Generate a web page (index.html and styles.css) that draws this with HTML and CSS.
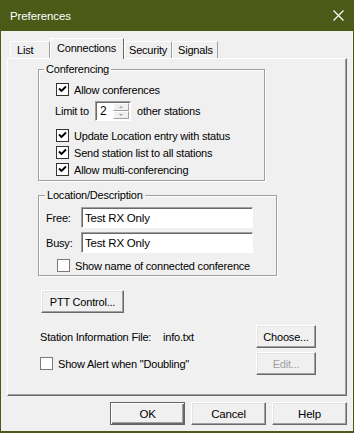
FILE: index.html
```html
<!DOCTYPE html>
<html lang="en">
<head>
    <meta charset="UTF-8">
    <title>Preferences</title>
    <link rel="stylesheet" href="styles.css">
</head>
<body>

<div class="window">
    <div class="titlebar">
        <span class="title">Preferences</span>
        <svg class="close" width="11" height="11" viewBox="0 0 11 11">
            <path d="M0.5 0.5 L10.5 10.5 M10.5 0.5 L0.5 10.5" stroke="#fff" stroke-width="1.2" fill="none"/>
        </svg>
    </div>

    <div class="client">
        <div class="tabs">
            <div class="tab tab-list">List</div>
            <div class="tab active">Connections</div>
            <div class="tab tab-security">Security</div>
            <div class="tab tab-signals">Signals</div>
        </div>

        <div class="panel">
            <fieldset class="group conf">
                <legend>Conferencing</legend>
                <div class="check-row">
                    <span class="checkbox checked"><svg viewBox="0 0 11 11"><path d="M2 4.5 L4.5 7 L9 2.5" /></svg></span>
                    <span>Allow conferences</span>
                </div>
                <div class="limit-row">
                    <span class="limit-label">Limit to</span>
                    <div class="spin">
                        <span class="spin-value">2</span>
                        <div class="spin-btns">
                            <span class="spin-up"></span>
                            <span class="spin-down"></span>
                        </div>
                    </div>
                    <span class="limit-after">other stations</span>
                </div>
                <div class="check-row first-after">
                    <span class="checkbox checked"><svg viewBox="0 0 11 11"><path d="M2 4.5 L4.5 7 L9 2.5" /></svg></span>
                    <span>Update Location entry with status</span>
                </div>
                <div class="check-row">
                    <span class="checkbox checked"><svg viewBox="0 0 11 11"><path d="M2 4.5 L4.5 7 L9 2.5" /></svg></span>
                    <span>Send station list to all stations</span>
                </div>
                <div class="check-row">
                    <span class="checkbox checked"><svg viewBox="0 0 11 11"><path d="M2 4.5 L4.5 7 L9 2.5" /></svg></span>
                    <span>Allow multi-conferencing</span>
                </div>
            </fieldset>

            <fieldset class="group loc">
                <legend>Location/Description</legend>
                <div class="field-row">
                    <span class="field-label">Free:</span>
                    <div class="textbox">Test RX Only</div>
                </div>
                <div class="field-row">
                    <span class="field-label">Busy:</span>
                    <div class="textbox">Test RX Only</div>
                </div>
                <div class="check-row show-name">
                    <span class="checkbox"></span>
                    <span>Show name of connected conference</span>
                </div>
            </fieldset>

            <button class="btn ptt">PTT Control...</button>

            <div class="file-row">
                <span class="file-label">Station Information File:</span>
                <span class="file-name">info.txt</span>
                <button class="btn side-btn">Choose...</button>
            </div>

            <div class="alert-row">
                <span class="checkbox"></span>
                <span class="alert-text">Show Alert when "Doubling"</span>
                <button class="btn side-btn" disabled>Edit...</button>
            </div>
        </div>

        <div class="footer">
            <button class="btn foot-btn default">OK</button>
            <button class="btn foot-btn">Cancel</button>
            <button class="btn foot-btn">Help</button>
        </div>
    </div>
</div>

</body>
</html>
```

FILE: styles.css
```css
* {
    box-sizing: border-box;
    margin: 0;
    padding: 0;
}

body {
    background: #fff;
    font-family: "Liberation Sans", Arial, sans-serif;
    font-size: 11px;
    letter-spacing: -0.2px;
    color: #000;
}

.window {
    width: 354px;
    height: 433px;
    border: 1px solid #4b5a17;
    border-bottom-width: 2px;
    background: #f0f0f0;
    display: flex;
    flex-direction: column;
}

.titlebar {
    height: 31px;
    background: #4b5a17;
    display: flex;
    align-items: center;
    justify-content: space-between;
    padding: 0 10px 0 10px;
    margin: -1px -1px 0 -1px;
}

.title {
    color: #fff;
    font-size: 11.5px;
    letter-spacing: -0.1px;
}

.close {
    display: block;
}

.client {
    padding: 7px 6px 0 6px;
    display: flex;
    flex-direction: column;
}

/* tabs */

.tabs {
    display: flex;
    align-items: flex-end;
    height: 20px;
    padding-left: 3px;
}

.tab {
    height: 17px;
    border: 1px solid;
    border-color: #fff #a0a0a0 transparent #fff;
    border-bottom: none;
    padding: 1px 0 0 6px;
    line-height: 14px;
    position: relative;
}

.tab-list {
    width: 40px;
}

.tab-security {
    width: 48px;
    padding-left: 4px;
}

.tab-signals {
    width: 46px;
    padding-left: 5px;
}

.tab.active {
    width: 74px;
    height: 21px;
    margin-bottom: -1px;
    background: #f0f0f0;
    border-color: #fff #696969 transparent #fff;
    padding-left: 6px;
    padding-top: 2px;
    z-index: 1;
}

.panel {
    width: 340px;
    height: 338px;
    border: 1px solid;
    border-color: #fff #696969 #696969 #fff;
    box-shadow: inset -1px -1px 0 #a0a0a0;
    display: flex;
    flex-direction: column;
    align-items: flex-start;
}

/* group boxes */

.group {
    border: 1px solid #a0a0a0;
    box-shadow: inset 1px 1px 0 #fff, 1px 1px 0 #fff;
    margin-left: 30px;
    min-width: 0;
}

.group legend {
    line-height: 13px;
    padding: 0 2px;
}

.conf {
    width: 227px;
    margin-top: 4px;
    padding: 5px 0 2px 16px;
}

.conf legend {
    margin-left: -11px;
}

.loc {
    width: 239px;
    margin-top: 8px;
    padding: 5px 0 1px 7px;
}

.loc legend {
    margin-left: -1px;
}

.check-row {
    display: flex;
    align-items: center;
    height: 17px;
    padding-left: 1px;
}

.check-row .checkbox {
    margin-right: 5px;
}

.checkbox {
    width: 13px;
    height: 13px;
    border: 1px solid #7a7a7a;
    background: #fff;
    flex: none;
}

.checkbox.checked {
    border-color: #333;
}

.checkbox svg {
    display: block;
    width: 11px;
    height: 11px;
    fill: none;
    stroke: #000;
    stroke-width: 1.9;
}

.first-after {
    margin-top: 6px;
}

.limit-row {
    display: flex;
    align-items: center;
    height: 20px;
    margin-top: 3px;
}

.limit-label {
    width: 40px;
}

.spin {
    width: 36px;
    height: 20px;
    border: 1px solid;
    border-color: #a0a0a0 #fff #fff #a0a0a0;
    box-shadow: inset 1px 1px 0 #696969;
    background: #fff;
    display: flex;
    align-items: center;
    justify-content: space-between;
    padding: 1px 1px 1px 4px;
}

.spin-value {
    font-size: 12px;
}

.spin-btns {
    display: flex;
    flex-direction: column;
    width: 16px;
    height: 16px;
}

.spin-up, .spin-down {
    flex: 1;
    background: #f0f0f0;
    border: 1px solid;
    border-color: #fff #a0a0a0 #a0a0a0 #fff;
    position: relative;
}

.spin-up::after, .spin-down::after {
    content: "";
    position: absolute;
    left: 5px;
    top: 2px;
    border-left: 2px solid transparent;
    border-right: 2px solid transparent;
}

.spin-up::after {
    border-bottom: 2px solid #a0a0a0;
}

.spin-down::after {
    border-top: 2px solid #a0a0a0;
}

.limit-after {
    margin-left: 6px;
}

.field-row {
    display: flex;
    align-items: center;
    height: 21px;
    margin-bottom: 4px;
}

.field-label {
    width: 35px;
}

.textbox {
    width: 172px;
    height: 21px;
    border: 1px solid;
    border-color: #a0a0a0 #fff #fff #a0a0a0;
    box-shadow: inset 1px 1px 0 #696969;
    background: #fff;
    padding: 2px 0 0 3px;
    font-size: 11.5px;
    line-height: 16px;
}

.show-name {
    margin: 3px 0 0 10px;
}

/* buttons */

.btn {
    font-family: inherit;
    font-size: 11px;
    letter-spacing: -0.2px;
    color: #000;
    background: #f0f0f0;
    border: 1px solid;
    border-color: #fff #696969 #696969 #fff;
    box-shadow: inset -1px -1px 0 #a0a0a0, inset 1px 1px 0 #e3e3e3;
    height: 23px;
}

.btn:disabled {
    color: #a0a0a0;
}

.ptt {
    width: 83px;
    margin: 14px 0 0 33px;
}

.file-row, .alert-row {
    display: flex;
    align-items: center;
    width: 100%;
    padding-left: 32px;
}

.file-row {
    margin-top: 12px;
}

.alert-row {
    margin-top: 4px;
}

.file-label {
    width: 123px;
}

.file-name {
    flex: 1;
}

.alert-row .checkbox {
    margin-right: 5px;
}

.alert-text {
    flex: 1;
}

.side-btn {
    width: 60px;
    margin-right: 30px;
}

.footer {
    display: flex;
    justify-content: flex-end;
    gap: 6px;
    margin-top: 6px;
}

.foot-btn {
    width: 75px;
    font-size: 11.5px;
}

.foot-btn.default {
    border: 1px solid #646464;
    box-shadow: inset 1px 1px 0 #fff, inset -1px -1px 0 #696969, inset -2px -2px 0 #a0a0a0;
}
```
